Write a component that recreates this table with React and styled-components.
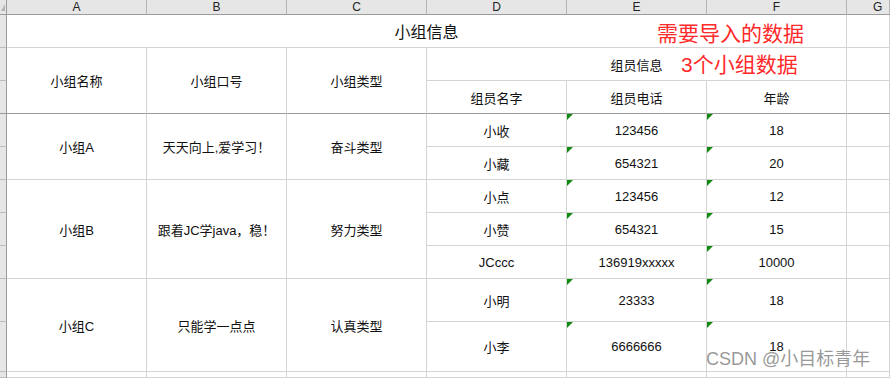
import styled, { createGlobalStyle } from "styled-components";

const GlobalStyle = createGlobalStyle`
  body {
    margin: 0;
    background: #fff;
    overflow: hidden;
  }
`;

const FONT = `"Liberation Sans", "Noto Sans CJK SC", sans-serif`;

const Sheet = styled.div`
  position: relative;
  width: 890px;
  height: 378px;
  overflow: hidden;
  display: grid;
  grid-template-columns: 7px repeat(6, 140px) 1fr;
  grid-template-rows: 15px repeat(8, 33px) 43px 50px 1fr;
  font-family: ${FONT};
  background: #fff;
`;

const Corner = styled.div`
  position: relative;
  grid-column: 1;
  grid-row: 1;
  background: #e6e6e6;
  border-right: 1px solid #9b9b9b;
  border-bottom: 1px solid #9b9b9b;
  box-sizing: border-box;

  // select-all mark
  &::after {
    content: "";
    position: absolute;
    right: 1px;
    bottom: 3px;
    border-left: 4px solid transparent;
    border-bottom: 7px solid #b4b4b4;
  }
`;

const ColumnHead = styled.div`
  grid-row: 1;
  grid-column: ${(p) => p.$col};
  display: flex;
  align-items: center;
  justify-content: ${(p) => (p.$edge ? "flex-start" : "center")};
  padding-left: ${(p) => (p.$edge ? "26px" : "0")};
  background: #e6e6e6;
  border-right: 1px solid #b5b5b5;
  border-bottom: 1px solid #9b9b9b;
  box-sizing: border-box;
  font-size: 12px;
  color: #222;
`;

const RowHead = styled.div`
  grid-column: 1;
  grid-row: ${(p) => p.$row};
  background: #e6e6e6;
  border-right: 1px solid #9b9b9b;
  border-bottom: 1px solid ${(p) => (p.$freeze ? "#9a9a9a" : "#bdbdbd")};
  box-sizing: border-box;
`;

const Cell = styled.div`
  position: relative;
  grid-column: ${(p) => p.$col};
  grid-row: ${(p) => p.$row};
  display: flex;
  align-items: center;
  justify-content: center;
  white-space: nowrap;
  font-size: ${(p) => p.$size || 13}px;
  color: #111;
  border-right: 1px solid #d4d4d4;
  border-bottom: 1px solid ${(p) => (p.$freeze ? "#9a9a9a" : "#d4d4d4")};
  box-sizing: border-box;
`;

// green "number stored as text" mark
const Flag = styled.span`
  position: absolute;
  top: 0;
  left: 0;
  width: 0;
  height: 0;
  border-top: 6px solid #118a11;
  border-right: 6px solid transparent;
`;

const Callout = styled.div`
  position: absolute;
  top: ${(p) => p.$top}px;
  left: ${(p) => p.$left}px;
  font-family: ${FONT};
  font-size: 21px;
  line-height: 21px;
  color: #ff2a2a;
  white-space: nowrap;
`;

const Watermark = styled.div`
  position: absolute;
  top: 350px;
  left: 706px;
  font-family: ${FONT};
  font-size: 18px;
  line-height: 18px;
  color: rgba(125, 125, 125, 0.8);
  text-shadow: 0 0 1px #fff;
  white-space: nowrap;
`;

const columns = ["A", "B", "C", "D", "E", "F", "G"];

const groups = [
  {
    name: "小组A",
    slogan: "天天向上,爱学习！",
    type: "奋斗类型",
    members: [
      { name: "小收", phone: "123456", age: "18" },
      { name: "小藏", phone: "654321", age: "20" },
    ],
  },
  {
    name: "小组B",
    slogan: "跟着JC学java，稳！",
    type: "努力类型",
    members: [
      { name: "小点", phone: "123456", age: "12" },
      { name: "小赞", phone: "654321", age: "15" },
      { name: "JCccc", phone: "136919xxxxx", age: "10000", plain: true },
    ],
  },
  {
    name: "小组C",
    slogan: "只能学一点点",
    type: "认真类型",
    members: [
      { name: "小明", phone: "23333", age: "18" },
      { name: "小李", phone: "6666666", age: "18" },
    ],
  },
];

const MemberRow = ({ member, row }) => (
  <>
    <Cell $col={5} $row={row}>{member.name}</Cell>
    <Cell $col={6} $row={row}>
      {!member.plain && <Flag />}
      {member.phone}
    </Cell>
    <Cell $col={7} $row={row}>
      <Flag />
      {member.age}
    </Cell>
    <Cell $col={8} $row={row} />
  </>
);

const GroupRows = ({ group, start }) => {
  const span = `${start} / ${start + group.members.length}`;
  return (
    <>
      <Cell $col={2} $row={span}>{group.name}</Cell>
      <Cell $col={3} $row={span}>{group.slogan}</Cell>
      <Cell $col={4} $row={span}>{group.type}</Cell>
      {group.members.map((m, i) => (
        <MemberRow key={m.name} member={m} row={start + i} />
      ))}
    </>
  );
};

export default function App() {
  let row = 5;
  const blocks = groups.map((g) => {
    const el = <GroupRows key={g.name} group={g} start={row} />;
    row += g.members.length;
    return el;
  });

  return (
    <>
      <GlobalStyle />
      <Sheet>
        <Corner />
        {columns.map((c, i) => (
          <ColumnHead key={c} $col={i + 2} $edge={c === "G"}>
            {c}
          </ColumnHead>
        ))}
        {Array.from({ length: 11 }, (_, i) => (
          <RowHead key={i} $row={i + 2} $freeze={i === 2} />
        ))}

        <Cell $col="2 / 8" $row={2} $size={16}>小组信息</Cell>
        <Cell $col={8} $row={2} />

        <Cell $col={2} $row="3 / 5" $freeze>小组名称</Cell>
        <Cell $col={3} $row="3 / 5" $freeze>小组口号</Cell>
        <Cell $col={4} $row="3 / 5" $freeze>小组类型</Cell>
        <Cell $col="5 / 8" $row={3}>组员信息</Cell>
        <Cell $col={8} $row={3} />
        <Cell $col={5} $row={4} $freeze>组员名字</Cell>
        <Cell $col={6} $row={4} $freeze>组员电话</Cell>
        <Cell $col={7} $row={4} $freeze>年龄</Cell>
        <Cell $col={8} $row={4} $freeze />

        {blocks}

        {columns.map((c, i) => (
          <Cell key={c} $col={i + 2} $row={12} />
        ))}

        <Callout $top={23} $left={657}>需要导入的数据</Callout>
        <Callout $top={54} $left={681}>3个小组数据</Callout>
        <Watermark>CSDN @小目标青年</Watermark>
      </Sheet>
    </>
  );
}
